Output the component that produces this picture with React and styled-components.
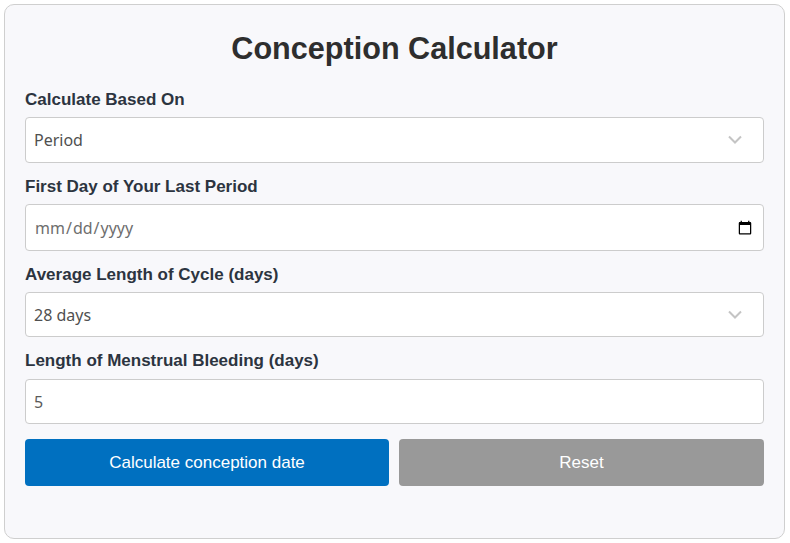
import React from 'react'
import styled, { createGlobalStyle } from 'styled-components'

const Global = createGlobalStyle`
  * { box-sizing: border-box; }
  html, body { margin: 0; padding: 0; background: #fff; }
  body { font-family: "Liberation Sans", Arial, sans-serif; }
`

const Page = styled.div`
  width: 790px;
  height: 543px;
  padding: 4px 5px 4px 4px;
`

const Card = styled.form`
  height: 535px;
  padding: 24px 20px 0;
  background: #f8f8fb;
  border: 1px solid #cfcfcf;
  border-radius: 10px;
`

const Title = styled.h1`
  margin: 0 0 23px;
  height: 38px;
  font-size: 30.6px;
  line-height: 38px;
  font-weight: 700;
  text-align: center;
  color: #2e2e2e;
`

const Field = styled.div`
  display: flex;
  flex-direction: column;
  margin-bottom: ${p => p.$gap}px;
`

const Label = styled.label`
  height: 18px;
  margin-bottom: ${p => p.$gap}px;
  font-size: 17px;
  line-height: 20px;
  font-weight: 700;
  color: #2c3440;
`

const SelectWrap = styled.div`
  position: relative;
  height: ${p => p.$h}px;
`

const Select = styled.select`
  appearance: none;
  display: block;
  width: 100%;
  height: 100%;
  padding: 0 8px;
  background: #fff;
  border: 1px solid #cccccc;
  border-radius: 4px;
  font-family: "Noto Sans", "Open Sans", sans-serif;
  font-size: 16px;
  color: #505050;
  outline: none;
`

const Chevron = styled.svg`
  position: absolute;
  top: 50%;
  right: 21px;
  width: 16px;
  height: 10px;
  margin-top: -5px;
  pointer-events: none;
`

const Input = styled.input`
  display: block;
  width: 100%;
  height: ${p => p.$h}px;
  padding: 0 8px;
  background: #fff;
  border: 1px solid #cccccc;
  border-radius: 4px;
  font-family: "Noto Sans", "Open Sans", sans-serif;
  font-size: 16px;
  color: ${p => p.$color};
  outline: none;
`

const Buttons = styled.div`
  display: grid;
  grid-template-columns: 364px 365px;
  gap: 10px;
  margin-top: 15px;
`

const Button = styled.button`
  height: 47px;
  border: 0;
  border-radius: 4px;
  background: ${p => p.$bg};
  color: #fff;
  font-family: "Liberation Sans", Arial, sans-serif;
  font-size: 17px;
`

const Arrow = () => (
  <Chevron viewBox="0 0 16 10" fill="none" stroke="#c4c4c4" strokeWidth="2">
    <path d="M2 1.5 8 7.5 14 1.5" />
  </Chevron>
)

const App = () => {
  return (
    <Page>
      <Global />
      <Card onSubmit={e => e.preventDefault()}>
        <Title>Conception Calculator</Title>
        <Field $gap={14}>
          <Label $gap={9}>Calculate Based On</Label>
          <SelectWrap $h={46}>
            <Select defaultValue="Period">
              <option>Period</option>
              <option>Ovulation</option>
            </Select>
            <Arrow />
          </SelectWrap>
        </Field>
        <Field $gap={14}>
          <Label $gap={9}>First Day of Your Last Period</Label>
          <Input type="date" $h={47} $color="#6e6e6e" />
        </Field>
        <Field $gap={14}>
          <Label $gap={9}>Average Length of Cycle (days)</Label>
          <SelectWrap $h={45}>
            <Select defaultValue="28 days">
              <option>27 days</option>
              <option>28 days</option>
              <option>29 days</option>
            </Select>
            <Arrow />
          </SelectWrap>
        </Field>
        <Field $gap={0}>
          <Label $gap={10}>Length of Menstrual Bleeding (days)</Label>
          <Input type="text" defaultValue="5" $h={45} $color="#5a5a5a" />
        </Field>
        <Buttons>
          <Button type="submit" $bg="#0070c0">Calculate conception date</Button>
          <Button type="reset" $bg="#999999">Reset</Button>
        </Buttons>
      </Card>
    </Page>
  )
}

export default App
